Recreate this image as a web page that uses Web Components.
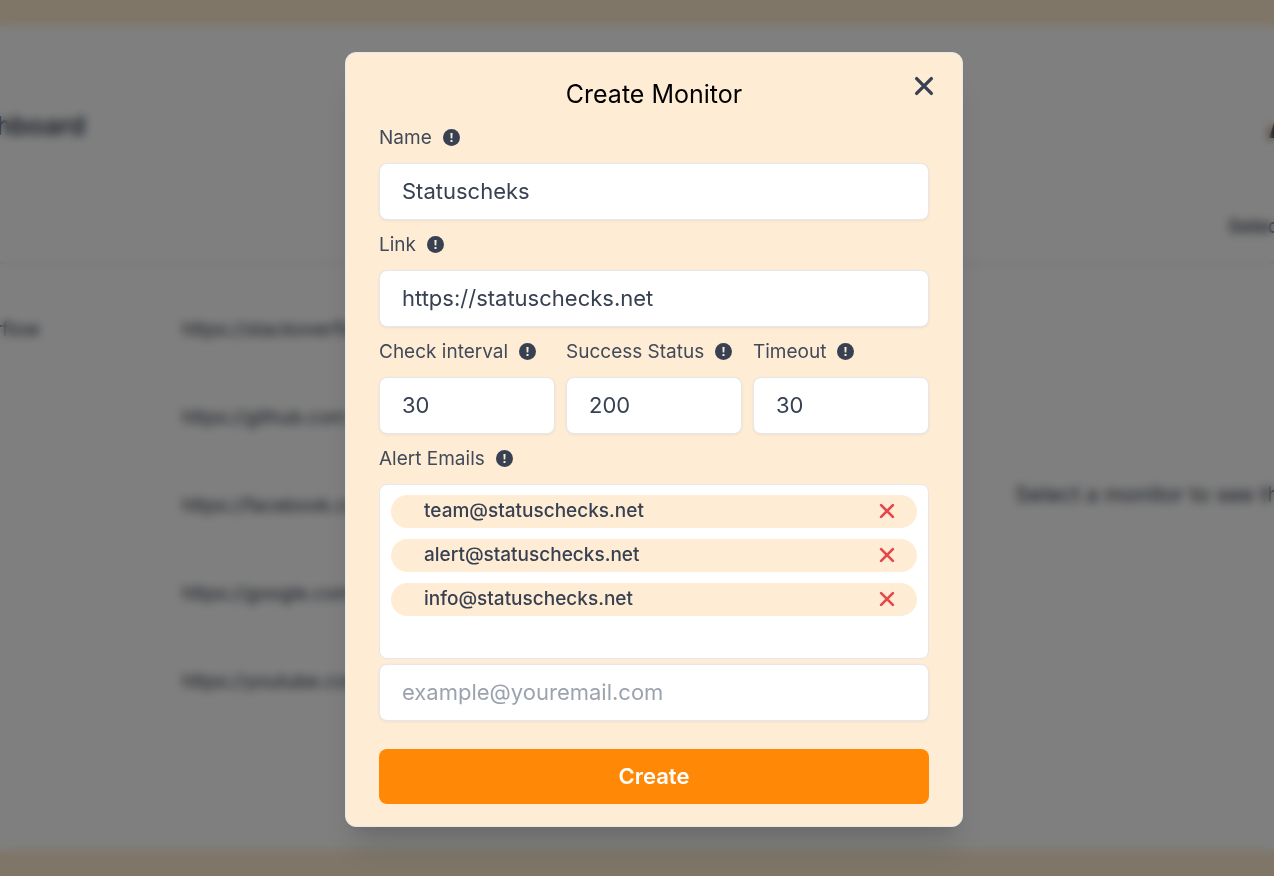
<!DOCTYPE html>
<html lang="en">
<head>
<meta charset="utf-8">
<meta name="viewport" content="width=device-width, initial-scale=1">
<title>Create Monitor</title>
<style>
  html, body { margin: 0; height: 100%; }
  body {
    font-family: Inter, "Liberation Sans", sans-serif;
    color: #374151;
    overflow: hidden;
  }
</style>
</head>
<body>
<status-app>
  <monitor-dashboard slot="page"></monitor-dashboard>
  <modal-dialog heading="Create Monitor">
    <form-field label="Name" value="Statuscheks"></form-field>
    <form-field label="Link" value="https://statuschecks.net"></form-field>
    <field-row>
      <form-field label="Check interval" value="30"></form-field>
      <form-field label="Success Status" value="200"></form-field>
      <form-field label="Timeout" value="30"></form-field>
    </field-row>
    <email-list label="Alert Emails" placeholder="example@youremail.com">
      <email-chip>team@statuschecks.net</email-chip>
      <email-chip>alert@statuschecks.net</email-chip>
      <email-chip>info@statuschecks.net</email-chip>
    </email-list>
    <submit-button>Create</submit-button>
  </modal-dialog>
</status-app>

<script>
const base = `:host, *, *::before, *::after { box-sizing: border-box; }
  button, input { font: inherit; color: inherit; margin: 0; }`;

function define(name, render) {
  customElements.define(name, class extends HTMLElement {
    constructor() {
      super();
      this.attachShadow({ mode: 'open' });
    }
    connectedCallback() {
      const t = document.createElement('template');
      t.innerHTML = render(this);
      this.shadowRoot.replaceChildren(t.content.cloneNode(true));
    }
  });
}

const fieldStyles = `
  .label { display: flex; align-items: center; gap: 11px; height: 50px; font-size: 19px; font-weight: 400; white-space: nowrap; color: #414a59; }
  info-icon { color: #374151; }
  input {
    display: block; width: 100%; height: 57px; padding: 0 22px;
    font-size: 22px; font-weight: 400; background: #fff;
    border: 1px solid #e5e7eb; border-radius: 8px;
    box-shadow: 0 1px 3px rgba(0, 0, 0, .06); outline: none;
  }
  input::placeholder { color: #9ca3af; opacity: 1; }`;

define('info-icon', () => `
  <style>:host { display: block; width: 17px; height: 17px; } svg { display: block; }</style>
  <svg width="17" height="17" viewBox="0 0 17 17" aria-hidden="true">
    <circle cx="8.5" cy="8.5" r="8.5" fill="currentColor"/>
    <path d="M7.4 4h2.2l-.3 5.5H7.7zM7.5 10.9h2v2h-2z" fill="#ffecd5"/>
  </svg>`);

define('cross-icon', () => `
  <style>:host { display: block; } svg { display: block; width: 100%; height: 100%; }</style>
  <svg viewBox="0 0 20 20" fill="none" stroke="currentColor" stroke-width="2.25" stroke-linecap="round" aria-hidden="true">
    <path d="M5.1 5.1l9.8 9.8M14.9 5.1l-9.8 9.8"/>
  </svg>`);

define('form-field', el => `
  <style>${base}
    :host { display: block; min-width: 0; }
    ${fieldStyles}
  </style>
  <div class="label"><label for="control">${el.getAttribute('label')}</label><info-icon></info-icon></div>
  <input id="control" type="text" value="${el.getAttribute('value')}">`);

define('field-row', () => `
  <style>:host { display: grid; grid-template-columns: repeat(3, 1fr); gap: 11px; }</style>
  <slot></slot>`);

define('email-chip', () => `
  <style>${base}
    :host {
      display: flex; align-items: center; justify-content: space-between;
      height: 33px; padding: 0 18px 0 33px; border-radius: 17px;
      background: #ffecd5; font-size: 19px; line-height: 32px; font-weight: 500;
    }
    span { height: 33px; }
    button { display: block; padding: 0; border: 0; background: none; color: #e5484a; cursor: pointer; }
    cross-icon { width: 24px; height: 24px; }
  </style>
  <span><slot></slot></span>
  <button type="button" aria-label="Remove"><cross-icon></cross-icon></button>`);

define('email-list', el => `
  <style>${base}
    :host { display: block; }
    ${fieldStyles}
    .list {
      display: flex; flex-direction: column; gap: 11px;
      min-height: 175px; padding: 10px 11px; margin-bottom: 5px;
      background: #fff; border: 1px solid #e5e7eb; border-radius: 8px;
    }
  </style>
  <div class="label"><label for="control">${el.getAttribute('label')}</label><info-icon></info-icon></div>
  <div class="list"><slot></slot></div>
  <input id="control" type="email" placeholder="${el.getAttribute('placeholder')}">`);

define('submit-button', () => `
  <style>${base}
    :host { display: block; margin-top: 28px; }
    button {
      display: block; width: 100%; height: 55px; border: 0; border-radius: 8px;
      background: #ff8906; color: #fff; font-size: 22px; font-weight: 600; cursor: pointer;
    }
  </style>
  <button type="button"><slot></slot></button>`);

define('modal-dialog', el => `
  <style>${base}
    :host {
      display: block; position: relative; width: 618px; max-width: 100%;
      padding: 23px 33px 22px; background: #ffecd5;
      border: 1px solid #e5e7eb; border-radius: 11px;
      box-shadow: 0 28px 34px -7px rgba(0, 0, 0, .12), 0 11px 14px -7px rgba(0, 0, 0, .08);
    }
    h2 { margin: 0; text-align: center; color: #000; font-size: 25px; font-weight: 400; line-height: 37px; }
    .close {
      position: absolute; top: 18px; right: 23px; padding: 0;
      border: 0; background: none; color: #374151; cursor: pointer;
    }
    .close cross-icon { width: 30px; height: 30px; }
  </style>
  <h2>${el.getAttribute('heading')}</h2>
  <button class="close" type="button" aria-label="Close"><cross-icon></cross-icon></button>
  <slot></slot>`);

define('monitor-dashboard', () => {
  const rows = [
    ['Stackoverflow', 'https://stackoverflow.com'],
    ['Github', 'https://github.com'],
    ['Facebook', 'https://facebook.com'],
    ['Google', 'https://google.com'],
    ['Youtube', 'https://youtube.com']
  ];
  return `
  <style>${base}
    :host {
      display: flex; flex-direction: column; height: 100%;
      padding: 26px 0; background: #ffecd0;
    }
    .panel {
      flex: 1; display: grid; grid-template-columns: minmax(0, 1fr) 346px;
      grid-template-rows: 238px 1fr; background: #fff;
      margin-left: -88px;
    }
    header {
      grid-column: 1 / -1; display: flex; justify-content: space-between;
      padding: 83px 0 0 36px; border-bottom: 2px solid #e5e7eb;
    }
    h1 { margin: 0; font-size: 26px; line-height: 34px; font-weight: 600; }
    .aside { width: 46px; white-space: nowrap; }
    .aside h2 { margin: 0 0 67px 40px; font-size: 34px; line-height: 34px; color: #000; }
    .aside p { margin: 0; font-size: 19px; line-height: 33px; font-weight: 500; }
    table { border-collapse: collapse; width: 100%; table-layout: fixed; align-self: start; margin-top: 21px; }
    td { height: 88px; padding: 0; font-size: 19px; white-space: nowrap; overflow: hidden; }
    td:first-child { width: 270px; }
    .empty { align-self: start; margin: 214px 0 0 87px; font-size: 22px; line-height: 33px; white-space: nowrap; }
  </style>
  <div class="panel">
    <header>
      <h1>Dashboard</h1>
      <div class="aside"><h2>All</h2><p>Select</p></div>
    </header>
    <table><tbody>
      ${rows.map(([n, u]) => `<tr><td>${n}</td><td>${u}</td></tr>`).join('')}
    </tbody></table>
    <p class="empty">Select a monitor to see the details</p>
  </div>`;
});

define('status-app', () => `
  <style>${base}
    :host { display: grid; height: 100%; overflow: hidden; }
    .page, .overlay { grid-area: 1 / 1; min-width: 0; min-height: 0; }
    .page { overflow: hidden; }
    .overlay {
      z-index: 1; display: grid; place-content: center;
      padding: 2px 0 0 34px; background: rgba(0, 0, 0, .5);
      backdrop-filter: blur(5px);
    }
  </style>
  <div class="page"><slot name="page"></slot></div>
  <div class="overlay"><slot></slot></div>`);
</script>
</body>
</html>
